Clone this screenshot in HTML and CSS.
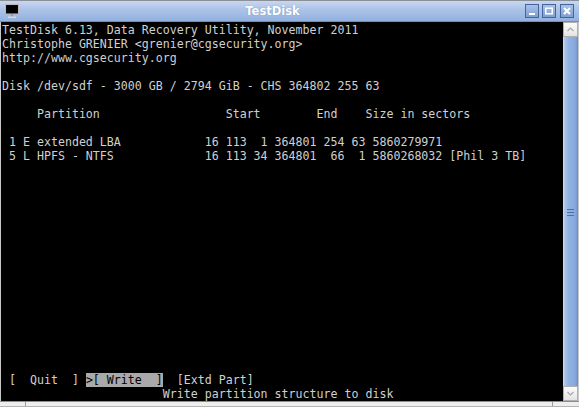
FILE: index.html
```html
<!DOCTYPE html>
<html>
<head>
<meta charset="utf-8">
<title>TestDisk</title>
<link rel="stylesheet" href="styles.css">
</head>
<body>
<div class="window">
  <div class="titlebar">
    <svg class="app-icon" width="16" height="16" viewBox="0 0 16 16">
      <rect x="1.5" y="1.5" width="13" height="9.5" fill="#111" stroke="#b8b8b8"/>
      <rect x="2.5" y="2.5" width="11" height="7.5" fill="#000"/>
      <rect x="7" y="11" width="2" height="2.5" fill="#9a9a9a"/>
      <rect x="4" y="13.5" width="8" height="1.5" fill="#d8d8d8"/>
    </svg>
    <div class="title">TestDisk</div>
    <div class="controls">
      <span class="wbtn"><svg width="12" height="12" viewBox="0 0 12 12"><rect x="3" y="8" width="6" height="2" fill="#fff"/></svg></span>
      <span class="wbtn"><svg width="12" height="12" viewBox="0 0 12 12"><rect x="2.75" y="3.25" width="6.5" height="5.5" fill="none" stroke="#fff" stroke-width="1.5"/></svg></span>
      <span class="wbtn"><svg width="12" height="12" viewBox="0 0 12 12"><path d="M3 3 L9 9 M9 3 L3 9" stroke="#fff" stroke-width="2.2"/></svg></span>
    </div>
  </div>
  <div class="body">
<pre class="term">TestDisk 6.13, Data Recovery Utility, November 2011
Christophe GRENIER &lt;grenier@cgsecurity.org&gt;
http://www.cgsecurity.org

Disk /dev/sdf - 3000 GB / 2794 GiB - CHS 364802 255 63

     Partition                  Start        End    Size in sectors

 1 E extended LBA            16 113  1 364801 254 63 5860279971
 5 L HPFS - NTFS             16 113 34 364801  66  1 5860268032 [Phil 3 TB]















 [  Quit  ] <span class="sel">&gt;[ Write  ]</span>  [Extd Part]
                       Write partition structure to disk</pre>
    <div class="scrollbar">
      <div class="sbtn"><svg width="13" height="13" viewBox="0 0 13 13"><path d="M3.5 8 L6.5 5 L9.5 8" fill="none" stroke="#a8a8a8" stroke-width="1.2"/></svg></div>
      <div class="thumb">
        <svg width="7" height="8" viewBox="0 0 7 8"><path d="M0 1.5H7M0 4.5H7M0 7.5H7" stroke="#4e70a6" stroke-width="1"/></svg>
      </div>
      <div class="sbtn"><svg width="13" height="13" viewBox="0 0 13 13"><path d="M3.5 5 L6.5 8 L9.5 5" fill="none" stroke="#a8a8a8" stroke-width="1.2"/></svg></div>
    </div>
  </div>
  <div class="statusbar">
    <span class="seg seg-left"></span>
    <span class="seg seg-mid"></span>
    <span class="seg seg-right"></span>
  </div>
</div>
</body>
</html>
```
FILE: styles.css
```css
html, body {
  margin: 0;
  padding: 0;
  background: #000;
}

.window {
  width: 579px;
  height: 407px;
  display: flex;
  flex-direction: column;
  background: #d4d4d4;
  overflow: hidden;
}

.titlebar {
  height: 22px;
  box-sizing: border-box;
  border-top: 1px solid #8a8f98;
  border-bottom: 1px solid #6f8fc2;
  background: linear-gradient(#c8d7ee, #aac2e8 45%, #93b2df);
  display: flex;
  align-items: center;
  padding: 0 5px 0 4px;
}

.app-icon {
  display: block;
  flex: none;
}

.title {
  flex: 1;
  text-align: center;
  font-family: "DejaVu Sans", sans-serif;
  font-weight: bold;
  font-size: 11.5px;
  color: #fff;
  text-shadow: 0 0 1px rgba(60, 90, 140, 0.6);
  line-height: 20px;
}

.controls {
  display: flex;
  gap: 3px;
  flex: none;
}

.wbtn {
  width: 14px;
  height: 14px;
  box-sizing: border-box;
  border: 1px solid #45659a;
  background: linear-gradient(#a9c1e7, #7f9fd3);
  display: flex;
  align-items: center;
  justify-content: center;
}

.wbtn + .wbtn + .wbtn {
  margin-left: 1px;
}

.wbtn svg {
  display: block;
}

.body {
  flex: 1;
  display: flex;
  border-left: 1px solid #c8c8c8;
  border-right: 1px solid #c8c8c8;
  min-height: 0;
}

.term {
  margin: 0;
  width: 562px;
  box-sizing: border-box;
  padding: 1px 0 0 1px;
  background: #000;
  color: #d0d0d0;
  font-family: "DejaVu Sans Mono", monospace;
  font-size: 11.627px;
  line-height: 14px;
  overflow: hidden;
}

.sel {
  background: #a9a9a9;
  color: #000;
}

.scrollbar {
  width: 15px;
  display: flex;
  flex-direction: column;
  background: #e8e8e8;
}

.sbtn {
  height: 15px;
  box-sizing: border-box;
  border: 1px solid #b0b0b0;
  background: linear-gradient(#fbfbfb, #e4e4e4);
  display: flex;
  align-items: center;
  justify-content: center;
  flex: none;
}

.sbtn svg {
  display: block;
}

.thumb {
  flex: 1;
  box-sizing: border-box;
  border-left: 1px solid #c7d9f3;
  border-right: 1px solid #6f93c9;
  background: linear-gradient(to right, #b4cbee, #91b2e2 35%, #86a8dc 85%, #7899cf);
  display: flex;
  align-items: center;
  justify-content: center;
}

.thumb svg {
  display: block;
}

.statusbar {
  height: 6px;
  box-sizing: border-box;
  border-top: 1px solid #8c8c8c;
  background: #eeeeee;
  display: flex;
}

.seg {
  height: 100%;
  box-sizing: border-box;
  border-bottom: 1px solid #b4b4b4;
}

.seg-left {
  width: 26px;
  border-right: 1px solid #9a9a9a;
}

.seg-mid {
  flex: 1;
  border-right: 1px solid #9a9a9a;
}

.seg-right {
  width: 26px;
}
```
